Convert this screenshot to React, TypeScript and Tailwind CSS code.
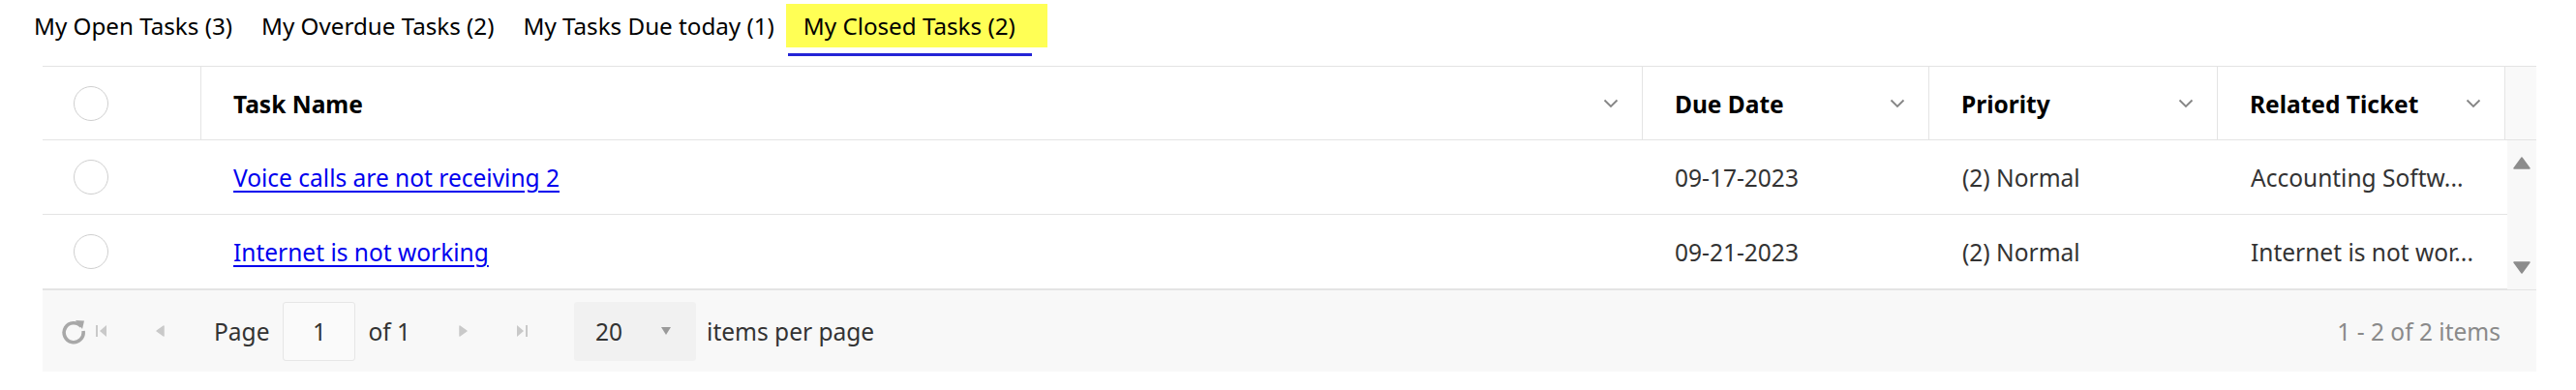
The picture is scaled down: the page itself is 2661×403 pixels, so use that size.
import React from "react";

const font = "font-['Noto_Sans','Open_Sans',sans-serif]";

const tabs = [
  { label: "My Open Tasks (3)" },
  { label: "My Overdue Tasks (2)" },
  { label: "My Tasks Due today (1)" },
];

const rows = [
  { name: "Voice calls are not receiving 2", due: "09-17-2023", priority: "(2) Normal", ticket: "Accounting Softw..." },
  { name: "Internet is not working", due: "09-21-2023", priority: "(2) Normal", ticket: "Internet is not wor..." },
];

function Chevron() {
  return (
    <svg width="16" height="10" viewBox="0 0 16 10" className="shrink-0">
      <path d="M1.5 1.5 L8 8 L14.5 1.5" fill="none" stroke="#858585" strokeWidth="1.8" />
    </svg>
  );
}

function Circle() {
  return <div className="w-[36px] h-[36px] rounded-full border border-[#cfcfcf] bg-white" />;
}

function HeaderCell({ title }: { title: string }) {
  return (
    <div className="flex items-center justify-between pl-[33px] pr-[24px] border-r border-[#e4e4e4]">
      <span className="font-bold text-black pt-[3px]">{title}</span>
      <Chevron />
    </div>
  );
}

function Tri({ dir, color = "#c9c9c9" }: { dir: "l" | "r" | "u" | "d"; color?: string }) {
  const d = {
    l: "M9 1 L2 6 L9 11 Z",
    r: "M3 1 L10 6 L3 11 Z",
    u: "M9 1 L17 12 L1 12 Z",
    d: "M1 1 L17 1 L9 12 Z",
  }[dir];
  const w = dir === "u" || dir === "d" ? 18 : 12;
  return (
    <svg width={w} height="13" viewBox={`0 0 ${w} 13`}>
      <path d={d} fill={color} stroke={color} strokeWidth="1.5" strokeLinejoin="round" />
    </svg>
  );
}

export default function App() {
  return (
    <div className={`${font} bg-white w-[2661px] h-[403px] text-[24.5px] leading-none`}>
      {/* Tabs */}
      <div className="flex items-start pt-[4px] pl-[20px] text-[24.2px]">
        {tabs.map((t, i) => (
          <div key={t.label} className="flex flex-col">
            <div className={`h-[45px] flex items-center pt-[2px] pl-[15px] ${i === 2 ? "pr-[12px]" : "pr-[15px]"} text-black`}>
              {t.label}
            </div>
          </div>
        ))}
        <div className="flex flex-col">
          <div className="h-[45px] flex items-center pt-[2px] pl-[18px] pr-[33px] bg-[#ffff55] text-black">
            My Closed Tasks (2)
          </div>
          <div className="h-[3px] mt-[6px] ml-[2px] mr-[16px] bg-[#2424d6]" />
        </div>
      </div>

      {/* Grid */}
      <div className="ml-[44px] mt-[10px] w-[2576px]">
        <div className="flex h-[77px] border-t border-b border-[#e4e4e4]">
          <div className="grid grid-cols-[164px_1489px_296px_298px_297px]">
            <div className="flex items-center pl-[32px] border-r border-[#e4e4e4]">
              <Circle />
            </div>
            <HeaderCell title="Task Name" />
            <HeaderCell title="Due Date" />
            <HeaderCell title="Priority" />
            <HeaderCell title="Related Ticket" />
          </div>
          <div className="flex-1 bg-[#f9f9f9]" />
        </div>

        <div className="flex">
          <div className="w-[2546px]">
            {rows.map((r) => (
              <div
                key={r.name}
                className="grid grid-cols-[164px_1489px_296px_298px_299px] h-[77px] border-b border-[#e4e4e4] text-[#333333]"
              >
                <div className="flex items-center pl-[32px]">
                  <Circle />
                </div>
                <div className="flex items-center pl-[33px] pt-[3px]">
                  <a href="#" className="text-[#0000ee] underline underline-offset-[4px]">
                    {r.name}
                  </a>
                </div>
                <div className="flex items-center pl-[33px] pt-[3px]">{r.due}</div>
                <div className="flex items-center pl-[34px] pt-[3px]">{r.priority}</div>
                <div className="flex items-center pl-[34px] pt-[3px] whitespace-nowrap overflow-hidden">{r.ticket}</div>
              </div>
            ))}
          </div>
          <div className="flex-1 bg-[#f8f8f8] flex flex-col items-center justify-between pt-[17px] pb-[16px]">
            <Tri dir="u" color="#8c8c8c" />
            <Tri dir="d" color="#8c8c8c" />
          </div>
        </div>

        {/* Pager */}
        <div className="flex items-center h-[85px] bg-[#f8f8f8] border-t border-[#e4e4e4] text-[#333333]">
          <svg width="28" height="28" viewBox="0 0 28 28" className="ml-[18px]">
            <path d="M22 9.5 A10 10 0 1 0 24 14" fill="none" stroke="#a8a8a8" strokeWidth="3.6" />
            <path d="M16 3 L25 3.5 L23 12 Z" fill="#a8a8a8" />
          </svg>
          <div className="ml-[8px]">
            <svg width="14" height="14" viewBox="0 0 14 14">
              <rect x="1" y="1" width="2" height="12" fill="#c9c9c9" />
              <path d="M12 1 L5 7 L12 13 Z" fill="#c9c9c9" />
            </svg>
          </div>
          <div className="ml-[48px]">
            <Tri dir="l" />
          </div>
          <span className="ml-[49px] pt-[3px]">Page</span>
          <div className="ml-[14px] w-[75px] h-[61px] flex items-center justify-center pt-[3px] border border-[#e6e6e6] rounded-[3px] bg-[#fafafa]">
            1
          </div>
          <span className="ml-[13px] pt-[3px]">of 1</span>
          <div className="ml-[48px]">
            <Tri dir="r" />
          </div>
          <div className="ml-[48px]">
            <svg width="14" height="14" viewBox="0 0 14 14">
              <path d="M2 1 L9 7 L2 13 Z" fill="#c9c9c9" />
              <rect x="11" y="1" width="2" height="12" fill="#c9c9c9" />
            </svg>
          </div>
          <div className="ml-[47px] w-[126px] h-[61px] flex items-center bg-[#f1f1f1] rounded-[3px] pl-[22px]">
            <span className="pt-[3px]">20</span>
            <svg width="12" height="10" viewBox="0 0 12 10" className="ml-[39px]">
              <path d="M1 1 L11 1 L6 9 Z" fill="#9a9a9a" />
            </svg>
          </div>
          <span className="ml-[11px] pt-[3px]">items per page</span>
          <span className="ml-auto pr-[37px] pt-[3px] text-[#8a8a8a]">1 - 2 of 2 items</span>
        </div>
      </div>
    </div>
  );
}
